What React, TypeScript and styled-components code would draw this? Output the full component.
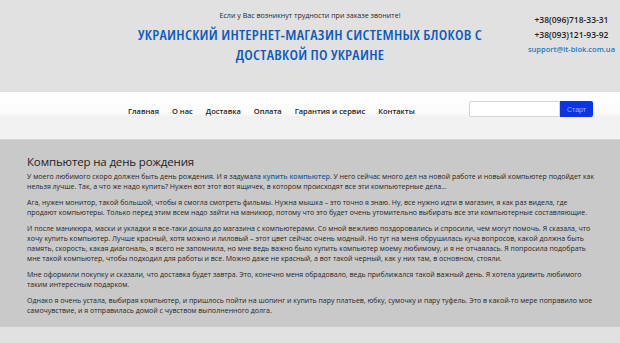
import styled, { createGlobalStyle } from "styled-components";

const GlobalStyle = createGlobalStyle`
  html, body {
    margin: 0;
    padding: 0;
    background: #e1e1e1;
    font-family: "Open Sans", "Liberation Sans", sans-serif;
    color: #2b2b2b;
  }
`;

const Header = styled.header`
  display: grid;
  grid-template-columns: 1fr 380px 1fr;
  height: 92px;
  box-sizing: border-box;
`;

const HeaderCenter = styled.div`
  grid-column: 2;
  text-align: center;
  padding-top: 10px;
`;

const Notice = styled.div`
  font-size: 7.1px;
  line-height: 10px;
  color: #262626;
`;

const Title = styled.h1`
  margin: 4px 0 0;
  font-size: 15px;
  line-height: 20px;
  font-weight: 600;
  font-stretch: condensed;
  letter-spacing: 0.3px;
  color: #0b5cc0;
`;

const Contacts = styled.div`
  grid-column: 3;
  display: flex;
  flex-direction: column;
  align-items: center;
  margin-left: auto;
  padding: 12px 5px 0 0;
`;

const Phone = styled.div`
  font-size: 8.5px;
  line-height: 15px;
  font-weight: 600;
  color: #1e1e1e;
  white-space: nowrap;
`;

const Email = styled.a`
  font-size: 7.5px;
  line-height: 15px;
  font-weight: 600;
  color: #1d7ab8;
  text-decoration: none;
  white-space: nowrap;
`;

const NavBar = styled.nav`
  height: 48px;
  background: linear-gradient(#ffffff 0, #fbfbfb 22px, #f2f2f2 24px, #f2f2f2 100%);
  border-bottom: 1px solid #d6d6d6;
  display: flex;
  align-items: flex-start;
  padding-top: 9px;
  box-sizing: border-box;
`;

const Menu = styled.ul`
  list-style: none;
  margin: 0 0 0 128px;
  padding: 0;
  display: flex;
  gap: 13px;
  height: 20px;
  align-items: center;
`;

const MenuItem = styled.li`
  font-size: 7.5px;
  color: #222;
  font-weight: 600;
`;

const Search = styled.form`
  margin-left: auto;
  margin-right: 27px;
  display: flex;
  height: 16px;
`;

const SearchInput = styled.input`
  width: 91px;
  height: 16px;
  box-sizing: border-box;
  border: 1px solid #d4d4d4;
  border-radius: 2px 0 0 2px;
  background: #fff;
  padding: 0 3px;
  outline: none;
`;

const SearchButton = styled.button`
  width: 33px;
  height: 16px;
  border: none;
  background: #0b34e4;
  color: #9fb1ff;
  font-family: "Liberation Sans", Arial, sans-serif;
  font-size: 7px;
  padding: 0;
  border-radius: 0 2px 2px 0;
`;

const Content = styled.main`
  background: #c9c9c9;
  padding: 14px 24px 8px 27px;
  height: 187px;
  box-sizing: border-box;
`;

const Heading = styled.h2`
  margin: 0 0 2px;
  font-size: 11.5px;
  line-height: 16px;
  font-weight: 500;
  letter-spacing: -0.15px;
  color: #1e1e1e;
`;

const Paragraph = styled.p`
  margin: 0 0 6px;
  font-size: 7px;
  line-height: 10px;
  color: #1f1f1f;
`;

const Link = styled.a`
  color: #14609f;
  text-decoration: none;
  font-weight: 600;
`;

const menu = ["Главная", "О нас", "Доставка", "Оплата", "Гарантия и сервис", "Контакты"];

export default function App() {
  return (
    <>
      <GlobalStyle />
      <Header>
        <HeaderCenter>
          <Notice>Если у Вас возникнут трудности при заказе звоните!</Notice>
          <Title>
            УКРАИНСКИЙ ИНТЕРНЕТ-МАГАЗИН СИСТЕМНЫХ БЛОКОВ С ДОСТАВКОЙ ПО УКРАИНЕ
          </Title>
        </HeaderCenter>
        <Contacts>
          <Phone>+38(096)718-33-31</Phone>
          <Phone>+38(093)121-93-92</Phone>
          <Email href="#">support@it-blok.com.ua</Email>
        </Contacts>
      </Header>
      <NavBar>
        <Menu>
          {menu.map((m) => (
            <MenuItem key={m}>{m}</MenuItem>
          ))}
        </Menu>
        <Search onSubmit={(e) => e.preventDefault()}>
          <SearchInput type="text" />
          <SearchButton type="submit">Старт</SearchButton>
        </Search>
      </NavBar>
      <Content>
        <Heading>Компьютер на день рождения</Heading>
        <Paragraph>
          У моего любимого скоро должен быть день рождения. И я задумала{" "}
          <Link href="#">купить компьютер</Link>. У него сейчас много дел на новой
          работе и новый компьютер подойдет как нельзя лучше. Так, а что же надо
          купить? Нужен вот этот вот ящичек, в котором происходят все эти
          компьютерные дела…
        </Paragraph>
        <Paragraph>
          Ага, нужен монитор, такой большой, чтобы я смогла смотреть фильмы. Нужна
          мышка – это точно я знаю. Ну, все нужно идти в магазин, я как раз видела,
          где продают компьютеры. Только перед этим всем надо зайти на маникюр,
          потому что это будет очень утомительно выбирать все эти компьютерные
          составляющие.
        </Paragraph>
        <Paragraph>
          И после маникюра, маски и укладки я все-таки дошла до магазина с
          компьютерами. Со мной вежливо поздоровались и спросили, чем могут помочь.
          Я сказала, что хочу купить компьютер. Лучше красный, хотя можно и
          лиловый – этот цвет сейчас очень модный. Но тут на меня обрушилась куча
          вопросов, какой должна быть память, скорость, какая диагональ, я всего не
          запомнила, но мне ведь важно было купить компьютер моему любимому, и я не
          отчаялась. Я попросила подобрать мне такой компьютер, чтобы подходил для
          работы и все. Можно даже не красный, а вот такой черный, как у них там, в
          основном, стояли.
        </Paragraph>
        <Paragraph>
          Мне оформили покупку и сказали, что доставка будет завтра. Это, конечно
          меня обрадовало, ведь приближался такой важный день. Я хотела удивить
          любимого таким интересным подарком.
        </Paragraph>
        <Paragraph>
          Однако я очень устала, выбирая компьютер, и пришлось пойти на шопинг и
          купить пару платьев, юбку, сумочку и пару туфель. Это в какой-то мере
          поправило мое самочувствие, и я отправилась домой с чувством выполненного
          долга.
        </Paragraph>
      </Content>
    </>
  );
}
